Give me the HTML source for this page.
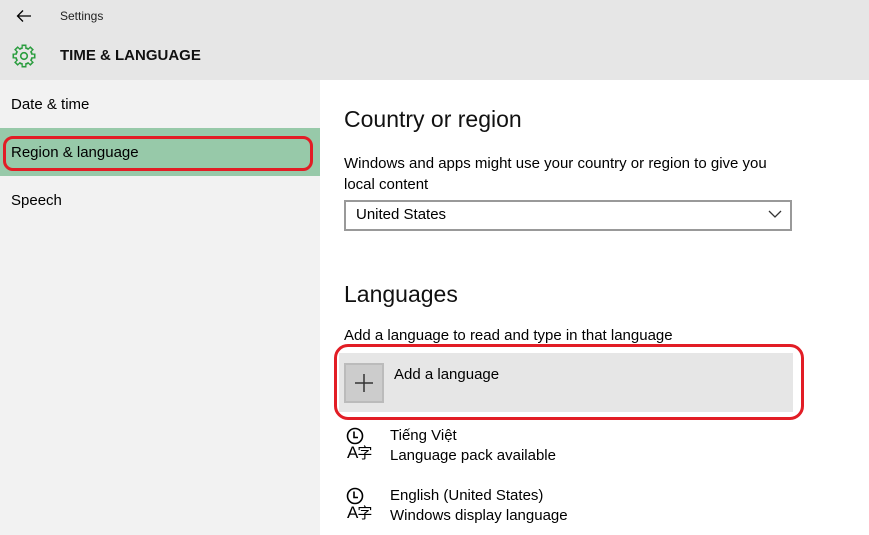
<!DOCTYPE html>
<html><head><meta charset="utf-8"><style>
*{margin:0;padding:0;box-sizing:border-box}
body{width:869px;height:535px;overflow:hidden;font-family:"Liberation Sans","Noto Sans CJK SC",sans-serif;background:#fff;position:relative;color:#000}
.a{position:absolute}
</style></head><body>
<div class="a" style="left:0;top:0;width:869px;height:80px;background:#e6e6e6"></div>
<svg class="a" style="left:16px;top:9px" width="16" height="14" viewBox="0 0 16 14"><path d="M15 7H2M7 1.5L1.5 7 7 12.5" stroke="#000" stroke-width="1.3" fill="none"/></svg>
<div class="a" style="left:60px;top:9px;font-size:12px;color:#222">Settings</div>
<svg class="a" style="left:12px;top:44px" width="24" height="24" viewBox="0 0 24 24">
<g fill="#2a9d3e"><circle cx="12" cy="12" r="9"/>
<g id="t"><rect x="9.5" y="0.5" width="5" height="5"/></g>
<use href="#t" transform="rotate(45 12 12)"/><use href="#t" transform="rotate(90 12 12)"/><use href="#t" transform="rotate(135 12 12)"/><use href="#t" transform="rotate(180 12 12)"/><use href="#t" transform="rotate(225 12 12)"/><use href="#t" transform="rotate(270 12 12)"/><use href="#t" transform="rotate(315 12 12)"/></g>
<g fill="#e6e6e6"><circle cx="12" cy="12" r="7.3"/>
<g id="u"><rect x="10.8" y="2.1" width="2.4" height="5"/></g>
<use href="#u" transform="rotate(45 12 12)"/><use href="#u" transform="rotate(90 12 12)"/><use href="#u" transform="rotate(135 12 12)"/><use href="#u" transform="rotate(180 12 12)"/><use href="#u" transform="rotate(225 12 12)"/><use href="#u" transform="rotate(270 12 12)"/><use href="#u" transform="rotate(315 12 12)"/></g>
<circle cx="12" cy="12" r="3.3" fill="none" stroke="#2a9d3e" stroke-width="1.6"/></svg>
<div class="a" style="left:60px;top:47px;font-size:15px;font-weight:bold;color:#111">TIME &amp; LANGUAGE</div>
<div class="a" style="left:0;top:80px;width:320px;height:455px;background:#f2f2f2"></div>
<div class="a" style="left:11px;top:96px;font-size:15px">Date &amp; time</div>
<div class="a" style="left:0;top:128px;width:320px;height:48px;background:#97c9a9"></div>
<div class="a" style="left:3px;top:136px;width:310px;height:35px;border:3px solid #e21d25;border-radius:10px"></div>
<div class="a" style="left:11px;top:144px;font-size:15px">Region &amp; language</div>
<div class="a" style="left:11px;top:192px;font-size:15px">Speech</div>
<div class="a" style="left:344px;top:106px;font-size:23px;color:#111">Country or region</div>
<div class="a" style="left:344px;top:153px;font-size:15px;line-height:21px;width:440px">Windows and apps might use your country or region to give you local content</div>
<div class="a" style="left:344px;top:200px;width:448px;height:31px;border:2px solid #999;background:#fff"></div>
<div class="a" style="left:356px;top:206px;font-size:15px">United States</div>
<svg class="a" style="left:768px;top:210px" width="14" height="9" viewBox="0 0 14 9"><path d="M1 1l6 6 6-6" stroke="#333" stroke-width="1.3" fill="none"/></svg>
<div class="a" style="left:344px;top:281px;font-size:23px;color:#111">Languages</div>
<div class="a" style="left:344px;top:327px;font-size:15px">Add a language to read and type in that language</div>
<div class="a" style="left:334px;top:344px;width:470px;height:76px;border:3px solid #e21d25;border-radius:14px"></div>
<div class="a" style="left:339px;top:353px;width:454px;height:59px;background:#e6e6e6"></div>
<div class="a" style="left:344px;top:363px;width:40px;height:40px;background:#ccc;border:2px solid #bbb"></div>
<svg class="a" style="left:354px;top:373px" width="20" height="20" viewBox="0 0 20 20"><path d="M10 1v18M1 10h18" stroke="#333" stroke-width="1.5"/></svg>
<div class="a" style="left:394px;top:366px;font-size:15px">Add a language</div>
<svg class="a" style="left:346px;top:427px" width="18" height="18" viewBox="0 0 18 18"><circle cx="9" cy="9" r="7.5" fill="none" stroke="#000" stroke-width="1.6"/><path d="M8 4.5v6h4" stroke="#000" stroke-width="1.6" fill="none"/></svg>
<div class="a" style="left:347px;top:443px;font-size:17px;line-height:20px;white-space:nowrap">A<span style="font-size:15px;margin-left:-1px">字</span></div>
<div class="a" style="left:390px;top:426px;font-size:15px;line-height:20px">Tiếng Việt<br>Language pack available</div>
<svg class="a" style="left:346px;top:487px" width="18" height="18" viewBox="0 0 18 18"><circle cx="9" cy="9" r="7.5" fill="none" stroke="#000" stroke-width="1.6"/><path d="M8 4.5v6h4" stroke="#000" stroke-width="1.6" fill="none"/></svg>
<div class="a" style="left:347px;top:503px;font-size:17px;line-height:20px;white-space:nowrap">A<span style="font-size:15px;margin-left:-1px">字</span></div>
<div class="a" style="left:390px;top:486px;font-size:15px;line-height:20px">English (United States)<br>Windows display language</div>
</body></html>
